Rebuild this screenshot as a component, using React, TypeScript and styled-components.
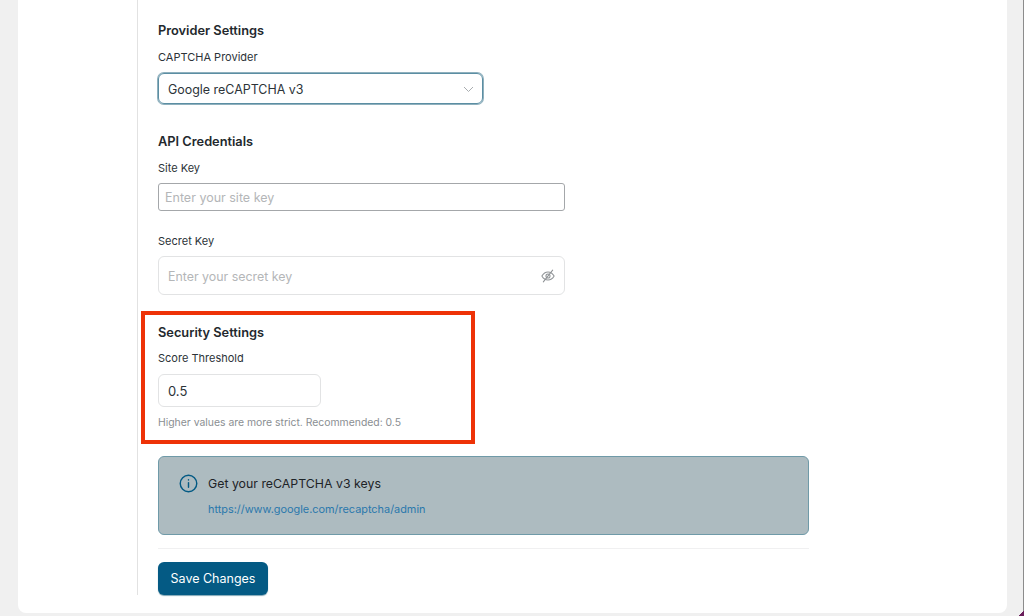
import React from "react";
import styled, { createGlobalStyle } from "styled-components";

const Global = createGlobalStyle`
  html, body { margin: 0; padding: 0; height: 100%; background: #f0f0f0; overflow: hidden; }
  *, *::before, *::after { box-sizing: border-box; }
`;

const Page = styled.div`
  position: relative;
  width: 1024px;
  height: 616px;
  padding: 0 16px 3px 18px;
  background: #f0f0f0;
  border-right: 1px solid #8c8c8c;
  font-family: Inter, "Liberation Sans", sans-serif;
  color: #1d2327;
`;

const Panel = styled.main`
  height: 613px;
  background: #fff;
  border-radius: 0 0 8px 8px;
  padding-left: 119px;
`;

const Column = styled.div`
  width: 672px;
  height: 595px;
  border-left: 1px solid #e2e2e2;
  padding: 23px 0 0 20px;
`;

const Heading = styled.h3<{ $top?: number }>`
  margin: ${(p) => p.$top ?? 0}px 0 0;
  font-size: 12.8px;
  line-height: 16px;
  font-weight: 600;
  color: #23282d;
`;

const Label = styled.label<{ $top?: number }>`
  display: block;
  margin-top: ${(p) => p.$top ?? 11}px;
  font-size: 11px;
  line-height: 14px;
  color: #2c3338;
`;

const Select = styled.div`
  margin-top: 9px;
  width: 325px;
  height: 31px;
  display: flex;
  align-items: center;
  justify-content: space-between;
  padding: 1px 8px 0 9px;
  border: 1px solid #5b8ea3;
  border-radius: 6px;
  box-shadow: 0 0 0 1px #8fb0bd;
  font-size: 12.45px;
  color: #2c3338;
`;

const SiteInput = styled.input`
  display: block;
  margin-top: 8px;
  width: 407px;
  height: 28px;
  padding: 0 6px;
  border: 1px solid #a4a7aa;
  border-radius: 3px;
  outline: none;
  background: #fff;
  font: 12.5px Inter, "Liberation Sans", sans-serif;
  &::placeholder { color: #b4b6b8; opacity: 1; }
`;

const SecretBox = styled.div`
  margin-top: 8px;
  width: 407px;
  height: 39px;
  display: flex;
  align-items: center;
  justify-content: space-between;
  padding: 1px 9px 0;
  border: 1px solid #e2e3e4;
  border-radius: 6px;
  font-size: 12.4px;
  color: #b4b6b8;
`;

const ThresholdBox = styled.div`
  margin-top: 9px;
  width: 163px;
  height: 33px;
  display: flex;
  align-items: center;
  padding: 0 9px;
  border: 1px solid #e2e3e4;
  border-radius: 6px;
  font-size: 13px;
  color: #2c3338;
`;

const Help = styled.p`
  margin: 9px 0 0;
  font-size: 10.4px;
  line-height: 13px;
  color: #8a8e92;
`;

const Highlight = styled.section`
  position: relative;
  margin-top: 30px;
  &::before {
    content: "";
    position: absolute;
    left: -17px;
    top: -14px;
    width: 334px;
    height: 133px;
    border: 4px solid #ee3207;
    pointer-events: none;
  }
`;

const Notice = styled.aside`
  margin-top: 27px;
  width: 651px;
  height: 79px;
  display: flex;
  gap: 10px;
  padding: 17px 0 0 20px;
  background: #adbbc0;
  border: 1px solid #6f9aa8;
  border-radius: 6px;
`;

const IconSlot = styled.div`
  width: 19px;
  height: 19px;
  flex: none;
`;

const NoticeBody = styled.div`
  display: flex;
  flex-direction: column;
  gap: 10px;
`;

const NoticeTitle = styled.div`
  font-size: 12.35px;
  line-height: 19px;
  color: #1d2327;
`;

const NoticeLink = styled.a`
  font-size: 10.9px;
  line-height: 13px;
  color: #2a78ac;
  text-decoration: none;
`;

const Divider = styled.hr`
  margin: 13px 0 0;
  width: 651px;
  height: 1px;
  border: 0;
  background: #f0f0f1;
`;

const SaveButton = styled.button`
  display: block;
  margin-top: 13px;
  width: 110px;
  height: 33px;
  padding: 0;
  border: 0;
  border-radius: 6px;
  background: #045a84;
  box-shadow: 0 1px 1px #7fa6b5;
  color: #fff;
  font: 400 12.5px Inter, "Liberation Sans", sans-serif;
`;

const CornerMark = styled.div`
  position: absolute;
  right: -1px;
  bottom: 0;
  width: 6px;
  height: 6px;
  background: linear-gradient(135deg, transparent 50%, #6b1f5c 50%);
`;

const Chevron = () => (
  <svg width="11" height="7" viewBox="0 0 11 7" fill="none" stroke="#a9adb0" strokeWidth="1">
    <path d="M1 1l4.500 4.500L10 1" />
  </svg>
);

const EyeOff = () => (
  <svg width="14" height="14" viewBox="0 0 24 24" fill="none" stroke="#8f9396" strokeWidth="1.800" strokeLinecap="round" strokeLinejoin="round">
    <path d="M1.500 12S5.500 5 12 5s10.500 7 10.500 7-4 7-10.500 7S1.500 12 1.500 12z" />
    <circle cx="12" cy="12" r="3.500" />
    <path d="M20 2 4 22" />
  </svg>
);

const InfoIcon = () => (
  <svg width="19" height="19" viewBox="0 0 20 20" fill="none" stroke="#045a84" strokeWidth="1.500" strokeLinecap="round">
    <circle cx="10" cy="10" r="8.700" />
    <path d="M10 9.300v4.700" />
    <path d="M10 6v.4" />
  </svg>
);

export default function App() {
  return (
    <Page>
      <Global />
      <Panel>
        <Column>
          <Heading>Provider Settings</Heading>
          <Label>CAPTCHA Provider</Label>
          <Select>
            Google reCAPTCHA v3
            <Chevron />
          </Select>

          <Heading $top={30}>API Credentials</Heading>
          <Label>Site Key</Label>
          <SiteInput placeholder="Enter your site key" readOnly />
          <Label $top={23}>Secret Key</Label>
          <SecretBox>
            Enter your secret key
            <EyeOff />
          </SecretBox>

          <Highlight>
            <Heading>Security Settings</Heading>
            <Label $top={10}>Score Threshold</Label>
            <ThresholdBox>0.5</ThresholdBox>
            <Help>Higher values are more strict. Recommended: 0.5</Help>
          </Highlight>

          <Notice>
            <IconSlot>
              <InfoIcon />
            </IconSlot>
            <NoticeBody>
              <NoticeTitle>Get your reCAPTCHA v3 keys</NoticeTitle>
              <NoticeLink href="#">https://www.google.com/recaptcha/admin</NoticeLink>
            </NoticeBody>
          </Notice>
          <Divider />
          <SaveButton>Save Changes</SaveButton>
        </Column>
      </Panel>
      <CornerMark />
    </Page>
  );
}
